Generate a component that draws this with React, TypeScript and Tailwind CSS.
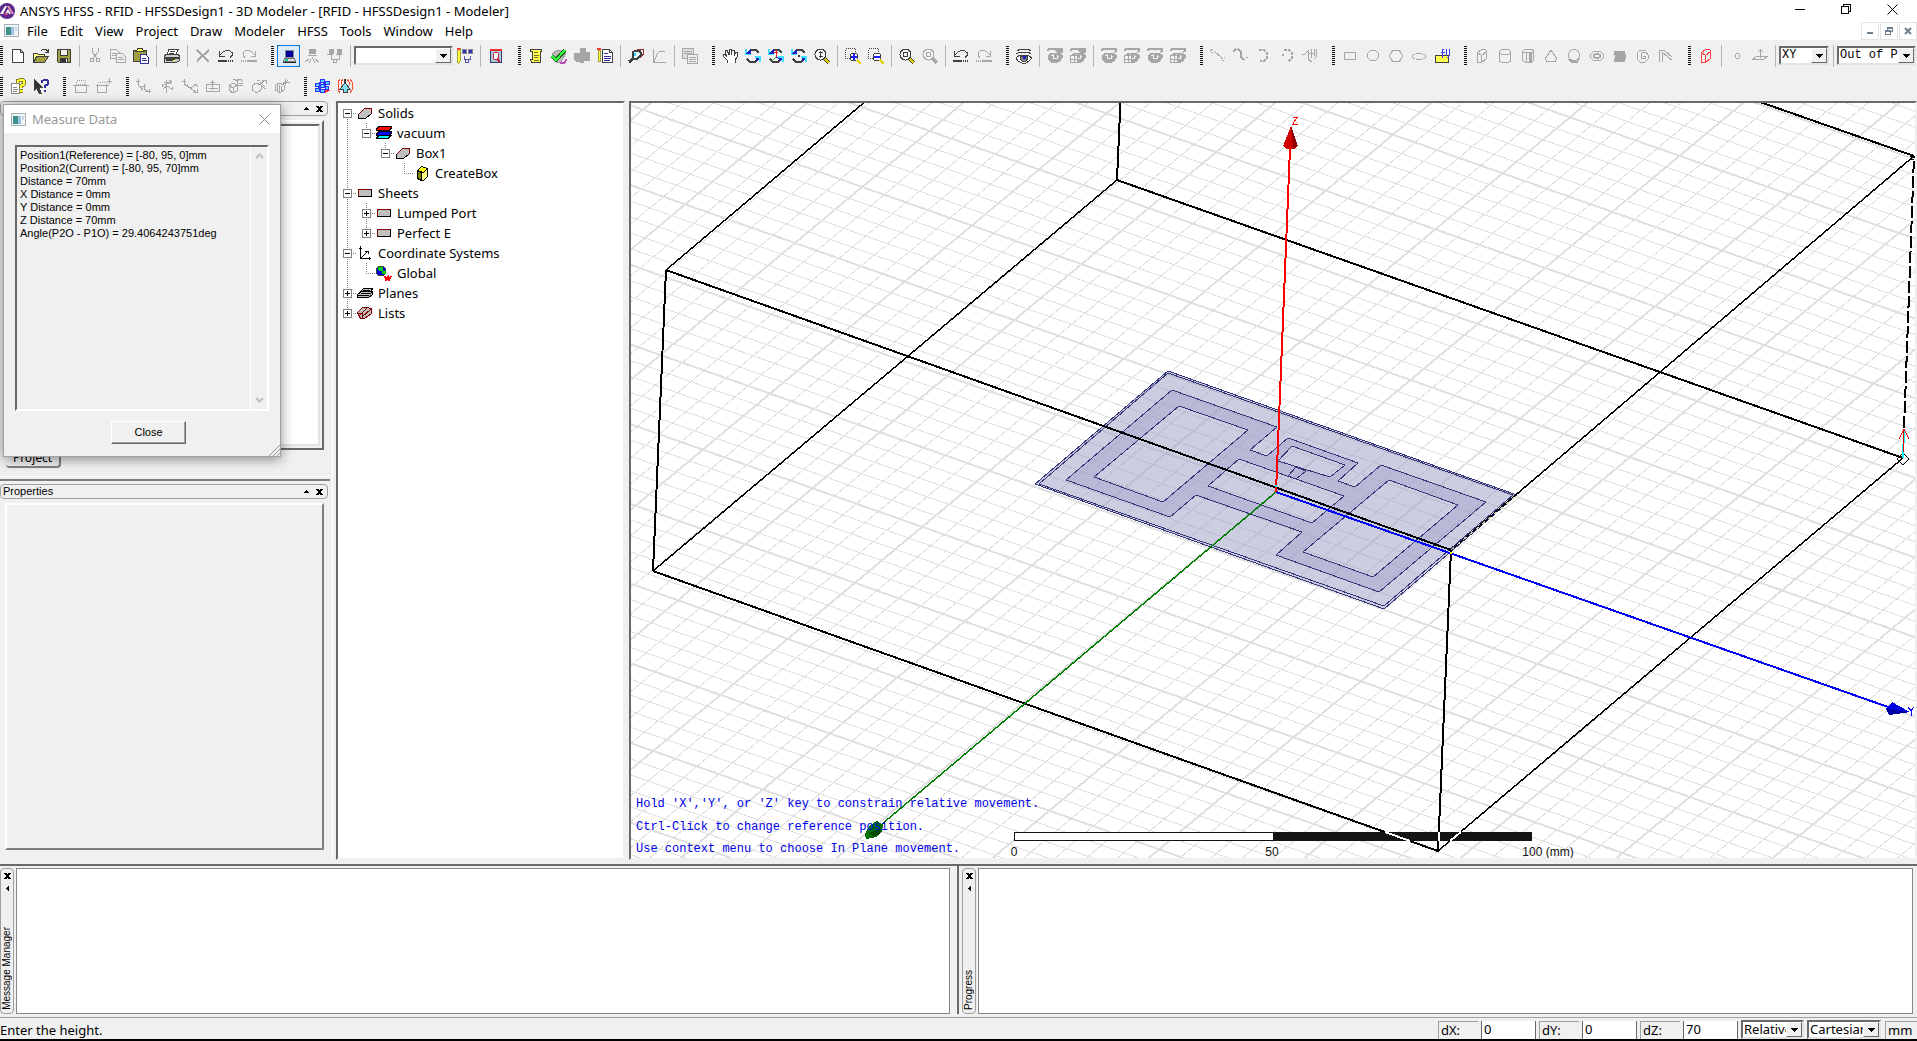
import { useState } from "react";
import type { ReactNode } from "react";

const UI = "font-['Noto_Sans','Noto_Sans_CJK_SC',sans-serif]";
const SMALL = "font-['Liberation_Sans',sans-serif]";

const GRAY = "#a6a6a6";
const DARK = "#404040";

/* ICONS */

function Icon({ children, color = DARK }: { children: ReactNode; color?: string }) {
  return (
    <svg
      width="16"
      height="16"
      viewBox="0 0 16 16"
      fill="none"
      stroke={color}
      shapeRendering="crispEdges"
      className="block shrink-0"
    >
      {children}
    </svg>
  );
}

const undoShape = (
  <>
    <path d="M1.500 3v5h5M2 7l3-3 3-1.500h3l3 2v3l-2 2" />
    <path d="M0 13h9" strokeWidth="2" />
    <path d="M10 13h6" strokeWidth="2" strokeDasharray="1 1" />
  </>
);
const redoShape = (
  <>
    <path d="M14.500 3v5h-5M14 7l-3-3-3-1.500h-3l-3 2v3l2 2" />
    <path d="M6 13h10" strokeWidth="2" />
    <path d="M0 13h6" strokeWidth="2" strokeDasharray="1 1" />
  </>
);
const rotateShape = (
  <>
    <path d="M4 4l2-2h5l3 3M12 12l-2 2H5l-3-3" strokeWidth="2" />
    <path d="M1 1v5h5" stroke="#40e0ff" strokeWidth="2" />
    <path d="M2 5l3-3v3z" fill="#2020c0" stroke="#2020c0" />
    <path d="M15 14V9h-5" stroke="#40e0ff" strokeWidth="2" />
    <path d="M14 11l-3 2v-3z" fill="#2020c0" stroke="#2020c0" />
  </>
);
const lensShape = (
  <>
    <circle cx="6.500" cy="6.500" r="5.500" fill="#f4f4f4" />
    <path d="M11 11l4 4" strokeWidth="3" />
  </>
);

function GrayEye({ cross = false, table = false }: { cross?: boolean; table?: boolean }) {
  return (
    <Icon color={GRAY}>
      <path d="M0 2l3-1h12v2l-2 1" strokeWidth="2" />
      <path d="M1 8l3-3h8l4 3-3 5-3 1.500H5L1 11z" fill={GRAY} />
      <path d="M4 8l2-1v3h4V7l2 2" stroke="#f1f1f1" />
      <path d="M0 4.500h10" stroke="#f1f1f1" />
      {cross && <path d="M7 0l4 4 4-4h1v4l-4 1" stroke={GRAY} strokeWidth="2" />}
      {table && <path d="M.5 7.500h7v7h-7zM.5 11h7M4 7.500v7" fill="#f1f1f1" />}
    </Icon>
  );
}

const icons: Record<string, ReactNode> = {
  New: (
    <Icon>
      <path d="M2.500 1.500h8l3 3v10h-11zM10.500 1.500v3h3" fill="#fff" />
    </Icon>
  ),
  Open: (
    <Icon>
      <path d="M.5 14.500v-9h4l1 1h6v2" fill="#ffff80" />
      <path d="M.5 14.500l3-6h12l-4 6z" fill="#a0a040" />
      <path d="M8 3l2-2h3l2 3M12 4h3V1" />
    </Icon>
  ),
  Save: (
    <Icon>
      <path d="M1.500 1.500h13v13h-12l-1-1z" fill="#a0a040" />
      <path d="M4.500 1.500h7v6h-7z" fill="#f1f1f1" />
      <path d="M4.500 10.500h7v4h-7z" fill="#333" />
      <path d="M10 11v3" stroke="#fff" />
    </Icon>
  ),
  Cut: (
    <Icon color={GRAY}>
      <path d="M5 0v4l5 6M11 0v4l-5 6" />
      <circle cx="5" cy="12" r="2" />
      <circle cx="11" cy="12" r="2" />
    </Icon>
  ),
  Copy: (
    <Icon color={GRAY}>
      <path d="M.5 1.500h6l3 3v6h-9zM2 5h5M2 7h5" />
      <path d="M6.500 5.500h6l3 3v6h-9zM8 9h5M8 11h6" fill="#f1f1f1" />
    </Icon>
  ),
  Paste: (
    <Icon>
      <path d="M.5 2.500h13v11h-13z" fill="#a0a040" />
      <path d="M3 3.500h8l-2-3H5z" fill="#ffff50" />
      <path d="M7.500 6.500h5l3 3v6h-8z" fill="#fff" stroke="#3030a0" />
      <path d="M9 10h4M9 12h5" stroke="#3030a0" />
    </Icon>
  ),
  Print: (
    <Icon>
      <path d="M5 1.500h9l-2 5H3z" fill="#fff" />
      <path d="M6 3h5M5 5h5" />
      <path d="M.5 7.500l2-1h11l2 1v5l-3 2h-12z" fill="#ccc" />
      <path d="M1 10h14M2 12h9" strokeWidth="2" />
      <path d="M9 12h2" stroke="#ff0" />
    </Icon>
  ),
  Delete: (
    <Icon color={GRAY}>
      <path d="M2 2l12 12M14 2L2 13" strokeWidth="2" />
    </Icon>
  ),
  Undo: <Icon>{undoShape}</Icon>,
  Redo: <Icon color={GRAY}>{redoShape}</Icon>,
  "Undo view": <Icon>{undoShape}</Icon>,
  "Redo view": <Icon color={GRAY}>{redoShape}</Icon>,
  "Local machine": (
    <Icon>
      <path d="M4.500 2.500h8v7h-8z" fill="#0000a0" stroke="#888" />
      <path d="M3.500 10.500h10l1 3h-12z" fill="#ddd" stroke="#777" />
      <path d="M4 12h3" stroke="#00d0a0" strokeWidth="2" />
      <path d="M2 14.500h13" stroke="#222" />
    </Icon>
  ),
  "Remote machine": (
    <Icon color={GRAY}>
      <path d="M5.500 1.500h6v4h-6zM4 7h9M8 9v2M5 11l-4 3M7 11l-2 4M9 11l2 4M11 11l4 3" fill={GRAY} />
    </Icon>
  ),
  Distributed: (
    <Icon color={GRAY}>
      <path d="M2 1h4v4H2zM10 1h4v4h-4z" fill={GRAY} />
      <path d="M0 6h6M9 6h6M4 7v4h8V7" />
      <circle cx="8" cy="13" r="2" fill="#f1f1f1" />
    </Icon>
  ),
  "Edit machines": (
    <Icon>
      <path d="M0 0h3v13l-1.500 3L0 13z" fill="#ff3" stroke="#a0a040" />
      <path d="M0 1h3" stroke="#f33" strokeWidth="2" />
      <path d="M5.500 1.500h4v4h-4zM11.500 1.500h4v4h-4z" fill="#3030c0" stroke="#888" />
      <path d="M7 8v3h6V8" stroke="#5050a0" />
      <circle cx="10" cy="13" r="2" stroke="#5050a0" />
    </Icon>
  ),
  Queue: (
    <Icon color="#3a3a70">
      <path d="M2.500 2.500h11v12h-11z" fill="#a9c8d8" />
      <path d="M2 2h12" stroke="#f03030" strokeWidth="2" />
      <ellipse cx="8" cy="8" rx="3" ry="4" fill="#fff" stroke="#d02040" />
      <path d="M9 11l3 3" stroke="#d02040" strokeWidth="2" />
    </Icon>
  ),
  Notes: (
    <Icon>
      <path d="M2.500 1.500h11v2h-1v11h-9l-1-3h2v-8h-2z" fill="#ffff50" />
      <path d="M6 4h4M6 7h5M6 9h4M6 12h5" stroke="#70702a" />
    </Icon>
  ),
  Validate: (
    <Icon>
      <path d="M1 6l5-4h8l1 3-5 9H5z" fill="#bbb" stroke="#999" />
      <path d="M9 15h4l3-4" stroke="#c050c0" strokeWidth="2" />
      <path d="M1 8l4 4L14 2" stroke="#206020" strokeWidth="4" />
      <path d="M1 8l4 4L14 2" stroke="#30ff40" strokeWidth="2" />
    </Icon>
  ),
  Analyze: (
    <Icon color={GRAY}>
      <path d="M6 .5h5l1 4h3l1 8H9v2l-6-1-3-3V6l6-1z" fill={GRAY} />
    </Icon>
  ),
  Results: (
    <Icon>
      <path d="M5.500 1.500h7l3 3v10h-10zM12.500 1.500v3h3" fill="#fff" />
      <path d="M7 5h4M7 8h7M7 10h7M7 12h6" stroke="#3030a0" />
      <path d="M1 2h2v11H1z" fill="#ff3" stroke="#a0a040" />
      <path d="M0 1h4" stroke="#f33" strokeWidth="2" />
    </Icon>
  ),
  Probe: (
    <Icon>
      <path d="M9 1.500h6v5l-3 3" stroke="#a03030" />
      <path d="M4.500 4.500l3-2h4l1 2v3l-3 3h-4l-1-2z" fill="#e8ffff" strokeWidth="2" />
      <path d="M7 5v3" stroke="#30d0ff" strokeWidth="2" />
      <path d="M5 11l-4 3" strokeWidth="3" />
    </Icon>
  ),
  Plot: (
    <Icon color={GRAY}>
      <path d="M2.500 1v13.500H15M3 14l3-8 3-3h5" />
    </Icon>
  ),
  "Copy image": (
    <Icon color={GRAY}>
      <path d="M.5 .5h11v10H.5zM2 3h8M2 5h8" fill="#ddd" />
      <path d="M5.500 6.500h10v9h-10zM7 9h7M7 11h7M7 13h7" fill="#f1f1f1" />
    </Icon>
  ),
  Pan: (
    <Icon>
      <path
        d="M5 15v-3L1 8V6h2l2 3-2-6 1-1h1l2 5V1h2v6l1-5h2v6l2-4h2l-1 5-2 3v3"
        fill="#fff"
      />
    </Icon>
  ),
  Rotate: <Icon>{rotateShape}</Icon>,
  "Rotate around axis": (
    <Icon>
      {rotateShape}
      <path d="M8 9V2M6 4h4" stroke="#e02020" />
      <path d="M8 9l-4 4" stroke="#20a020" />
      <path d="M8 9l5 3" stroke="#2020e0" />
    </Icon>
  ),
  "Rotate center": (
    <Icon>
      {rotateShape}
      <path d="M7 8h2" strokeWidth="2" />
    </Icon>
  ),
  "Zoom dynamic": (
    <Icon>
      {lensShape}
      <path d="M11 11l4 4" stroke="#e0d000" strokeWidth="2" />
      <path d="M6.500 3v7M4.500 4.500h4M4.500 8.500h4" strokeWidth="1" />
    </Icon>
  ),
  "Zoom in": (
    <Icon>
      <path d="M.5 .5h10v10H.5z" strokeDasharray="1 1" />
      <circle cx="9" cy="9" r="4" fill="#fff" />
      <path d="M6 9h6M9 6v6" stroke="#2020ff" strokeWidth="2" />
      <path d="M12 12l4 4" stroke="#e0d000" strokeWidth="2" />
    </Icon>
  ),
  "Zoom out": (
    <Icon>
      <path d="M.5 .5h10v10H.5z" strokeDasharray="1 1" />
      <circle cx="9" cy="9" r="4" fill="#fff" />
      <path d="M6 9h6" stroke="#2020ff" strokeWidth="2" />
      <path d="M12 12l4 4" stroke="#e0d000" strokeWidth="2" />
    </Icon>
  ),
  "Fit all": (
    <Icon>
      {lensShape}
      <path d="M11 11l4 4" stroke="#e0d000" strokeWidth="2" />
      <path d="M4.500 4.500h4v4h-4z" />
    </Icon>
  ),
  "Fit selection": (
    <Icon color={GRAY}>
      {lensShape}
      <path d="M4.500 4.500h4v4h-4z" />
    </Icon>
  ),
  Visibility: (
    <Icon>
      <path d="M1 3l3-2h8l3 2" />
      <path d="M0 6l4-2h8l3 2" />
      <path d="M0 10l4-3h8l4 3-3 3-3 2H6l-4-2z" fill="#fff" />
      <path d="M5 8h6l1 2-2 3H6l-2-2z" fill="#888" />
      <path d="M7 9.500h3" stroke="#2020c0" strokeWidth="3" />
    </Icon>
  ),
  "Hide selection": <GrayEye cross />,
  "Hide selection all views": <GrayEye cross table />,
  "Show selection": <GrayEye />,
  "Show selection all views": <GrayEye table />,
  "Show all": <GrayEye />,
  "Show all views": <GrayEye table />,
  Line: (
    <Icon color={GRAY}>
      <path d="M0 3l3-2M4 3l8 7" strokeWidth="1" />
      <path d="M11 11l4-2M1 4h2M12 12h3" strokeDasharray="2 1" />
    </Icon>
  ),
  Spline: (
    <Icon color={GRAY}>
      <path d="M0 4l3-3M5 1l3 3v5l3 3" strokeWidth="2" />
      <path d="M11 12l4-3" strokeDasharray="2 1" />
    </Icon>
  ),
  "Arc 3 point": (
    <Icon color={GRAY}>
      <path d="M3 2h5l3 3v5l-3 3H4" strokeWidth="2" strokeDasharray="3 1" />
    </Icon>
  ),
  "Arc center": (
    <Icon color={GRAY}>
      <path d="M5 2h5l3 3v5l-4 4" strokeWidth="2" strokeDasharray="3 1" />
      <path d="M3 7h2" strokeWidth="2" />
    </Icon>
  ),
  "Equation curve": (
    <Icon color={GRAY}>
      <path d="M0 6h3l3-3M6 2v9l4 3M9 1v9M7 5h5M12 1v7M14 1v8l-2 2" />
    </Icon>
  ),
  Rectangle: (
    <Icon color={GRAY}>
      <path d="M2.500 4.500h11v7h-11z" />
    </Icon>
  ),
  Circle: (
    <Icon color={GRAY}>
      <circle cx="8" cy="7.500" r="5.500" />
    </Icon>
  ),
  Polygon: (
    <Icon color={GRAY}>
      <path d="M4.500 2.500h7l3 5.500-3 5.500h-7L1.500 8z" />
    </Icon>
  ),
  Ellipse: (
    <Icon color={GRAY}>
      <ellipse cx="8" cy="8.500" rx="6.500" ry="3" />
    </Icon>
  ),
  "Equation surface": (
    <Icon>
      <path d="M1.500 7.500h13v7h-13z" fill="#ffff50" />
      <path d="M8 10V2l2-1M7 4h4M12 1v6M15 1v7l-2 2" stroke="#4040ff" />
    </Icon>
  ),
  Box: (
    <Icon color={GRAY}>
      <path d="M3.500 4.500l4-3h4l1 1v8l-5 4h-4zM3.500 4.500l4 3 5-4M7.500 7.500v7" />
    </Icon>
  ),
  Cylinder: (
    <Icon color={GRAY}>
      <ellipse cx="8" cy="4" rx="5.500" ry="2.500" />
      <path d="M2.500 4v9l2 1.500h7l2-1.500V4" />
    </Icon>
  ),
  "Regular polyhedron": (
    <Icon color={GRAY}>
      <path d="M2.500 3.500l2-2h8l1 2v9l-2 2h-6l-3-2zM2.500 4.500h11M6.500 5v9" />
      <path d="M10.500 5v9" strokeWidth="3" />
    </Icon>
  ),
  Cone: (
    <Icon color={GRAY}>
      <path d="M8 2l6 9-2 2.500H4L2 11z" />
    </Icon>
  ),
  Sphere: (
    <Icon color={GRAY}>
      <circle cx="8" cy="7" r="5.500" />
      <path d="M3 11l3 3h5l2-4" strokeWidth="2" />
    </Icon>
  ),
  Torus: (
    <Icon color={GRAY}>
      <ellipse cx="8" cy="8" rx="6.500" ry="5" />
      <ellipse cx="8" cy="8" rx="3" ry="2" strokeWidth="2" />
    </Icon>
  ),
  Helix: (
    <Icon color={GRAY}>
      <path d="M2 4h11M3 8h11M2 12h11" strokeWidth="3" />
      <path d="M1 6h13M2 10h12" />
    </Icon>
  ),
  Spiral: (
    <Icon color={GRAY}>
      <path d="M8 8h2v2H6V6l2-2h3l2 3v4l-3 3H5l-3-3V5l3-3h6" />
    </Icon>
  ),
  "Bond wire": (
    <Icon color={GRAY}>
      <path d="M1.500 14V2.500h5l8 7M4.500 14V5l2 1 7 6" strokeWidth="1" />
    </Icon>
  ),
  Region: (
    <Icon color="#ff4040">
      <path d="M3.500 4.500l4-3h4l1 1v8l-5 4h-4zM3.500 4.500l4 3 5-4M7.500 7.500v7" />
    </Icon>
  ),
  Point: (
    <Icon color={GRAY}>
      <path d="M6.500 7l1-1.500h2l1 1.500v2l-1 1.500h-2l-1-1.500z" />
    </Icon>
  ),
  Plane: (
    <Icon color={GRAY}>
      <path d="M.5 11.500l4-3h11l-4 3zM8.500 10V2M6 4l2.500-2L11 4" />
    </Icon>
  ),
  "Help topics": (
    <Icon>
      <path d="M1.500 5.500h8v10h-8zM3 9h4M3 11h5M3 13h4" fill="#fff" stroke="#888" />
      <path d="M8 5V3l2-1h3l1 1v3l-3 2v2M10 13h3" stroke="#80802a" strokeWidth="4" />
      <path d="M8 5V3l2-1h3l1 1v3l-3 2v2M10 13h3" stroke="#ffff30" strokeWidth="2" />
    </Icon>
  ),
  "Context help": (
    <Icon>
      <path d="M1 1v12l3-3 2 5h2L6 9h3z" fill="#333" />
      <path d="M9 5V3l2-1h3l1 1v3l-3 2v2M11 13h2" stroke="#3030a0" strokeWidth="2" />
    </Icon>
  ),
  "Section A": (
    <Icon color={GRAY}>
      <path d="M3.500 2.500h9v4h-9z" strokeDasharray="1 1" />
      <path d="M0 7.500h16M2.500 8v6.500h11V8" />
    </Icon>
  ),
  "Section B": (
    <Icon color={GRAY}>
      <path d="M1.500 4.500h9v3h-9z" strokeDasharray="1 1" />
      <path d="M0 7.500h13M1.500 8v6.500h9V8M13.500 0v6M11 3h5" />
    </Icon>
  ),
  "Relative CS offset": (
    <Icon color={GRAY}>
      <path d="M2 1v6l5 4M0 3h4M8 6v5l6 3M4 9l3 2-2 2M9 13h6M6 8h4M13 11v4" />
    </Icon>
  ),
  "Relative CS rotate": (
    <Icon color={GRAY}>
      <path d="M7.500 15V2M5 4h6M3 8l9-4M4 11l4-3 5 3M10 2l3 2-2 2M3 6v3M13 9v3" />
    </Icon>
  ),
  "Relative CS both": (
    <Icon color={GRAY}>
      <path d="M2 1v5l6 4M0 3h4M8 10l6-3M8 10l6 4M12 6l3 1v2M11 14h4v-3M5 6v3" />
    </Icon>
  ),
  "Face CS": (
    <Icon color={GRAY}>
      <path d="M1.500 6.500h13v7h-13zM7.500 12V2M5 4h5M4 10h9" />
    </Icon>
  ),
  "Object CS offset": (
    <Icon color={GRAY}>
      <path d="M1 7l4-2 4 2v6l-4 2-4-3zM1 7l4 3 4-3M5 10v5M9 1v6h6M12 1l3 3M5 1h3M7 3l7-2M11 5h4" />
    </Icon>
  ),
  "Object CS rotate": (
    <Icon color={GRAY}>
      <path d="M1 8l4-3 5 2v5l-4 3-5-3zM8 7l6-5M11 2h4v4M10 8l5 3M6 2h3M9 4l5 5" />
    </Icon>
  ),
  "Object CS both": (
    <Icon color={GRAY}>
      <path d="M1 8l4-3 5 2v5l-4 3-5-3zM3 7v6M5 7v7M7 8v6M8 7l6-5M9 4h7M11 1v6" />
    </Icon>
  ),
  Assign: (
    <Icon color="#3030ff">
      <path d="M9 14l6-3" stroke="#f03030" strokeWidth="4" />
      <path d="M6.500 1.500h4v3h-4zM11.500 3.500h4v3h-4zM1.500 5.500h4v3h-4zM6.500 6.500h4v3h-4zM11.500 8.500h3v3h-3zM1.500 10.500h4v3h-4zM6.500 11.500h4v3h-4z" fill="#50d8ff" />
      <path d="M5 5l2 2M10 5l2 4M5 9l2 2" strokeWidth="2" />
    </Icon>
  ),
  Radiation: (
    <Icon>
      <path d="M3 1L1 4v8l2 3M13 1l2 3v8l-2 3M6 1L4 4v3M10 1l2 3v3" stroke="#ff5030" />
      <path d="M8 1l1 5 4 5h-3v3H6v-3H3l4-5z" fill="#80e0f0" />
    </Icon>
  ),
};

const blankIcon = <Icon>{null}</Icon>;

/* "|" is a separator between buttons of one toolbar */
const mainBar = ["New", "Open", "Save", "|", "Cut", "Copy", "Paste", "|", "Print", "|", "Delete", "Undo", "Redo"];
const machineBar = ["Local machine", "Remote machine", "Distributed"];
const analysisBar = ["Notes", "Validate", "Analyze", "Results", "|", "Probe", "Plot", "|", "Copy image"];
const viewBar = [
  "Pan", "Rotate", "Rotate around axis", "Rotate center", "Zoom dynamic", "|",
  "Zoom in", "Zoom out", "|", "Fit all", "Fit selection", "|", "Undo view", "Redo view",
];
const visibilityBar = [
  "Visibility", "|", "Hide selection", "Hide selection all views", "|",
  "Show selection", "Show selection all views", "Show all", "Show all views",
];
const curveBar = ["Line", "Spline", "Arc 3 point", "Arc center", "Equation curve"];
const sheetBar = ["Rectangle", "Circle", "Polygon", "Ellipse", "Equation surface"];
const solidBar = ["Box", "Cylinder", "Regular polyhedron", "Cone", "Sphere", "Torus", "Helix", "Spiral", "Bond wire"];
const csBar = [
  "Relative CS offset", "Relative CS rotate", "Relative CS both", "Face CS",
  "Object CS offset", "Object CS rotate", "Object CS both",
];

function Separator() {
  return (
    <span className="flex w-2 shrink-0 justify-center">
      <span className="h-[22px] w-px bg-[#b4b4b4]" />
    </span>
  );
}

function Buttons({ names, active }: { names: string[]; active?: string }) {
  return (
    <>
      {names.map((name, i) =>
        name === "|" ? (
          <Separator key={i} />
        ) : (
          <button
            key={name}
            title={name}
            aria-label={name}
            className={
              name === active
                ? "flex h-[22px] w-[23px] shrink-0 items-center justify-center border border-[#0078d7] bg-[#d9ebf9]"
                : "flex h-[22px] w-[23px] shrink-0 items-center justify-center"
            }
          >
            {icons[name] ?? blankIcon}
          </button>
        )
      )}
    </>
  );
}

function Toolbar({ children }: { children: ReactNode }) {
  return (
    <div className="flex shrink-0 items-center">
      <span className="mr-[3px] h-[19px] w-[3px] bg-[repeating-linear-gradient(#111_0_1px,transparent_1px_2px)]" />
      {children}
    </div>
  );
}

function DropDown({
  label,
  options,
  className,
}: {
  label: string;
  options: string[];
  className: string;
}) {
  return (
    <div className={`relative h-[19px] shrink-0 border-2 border-t-[#696969] border-l-[#696969] border-r-[#e3e3e3] border-b-[#e3e3e3] bg-white ${className}`}>
      <select
        aria-label={label}
        className="block h-full w-full appearance-none overflow-hidden pl-px leading-[15px] outline-none"
      >
        {options.map((o) => (
          <option key={o}>{o}</option>
        ))}
      </select>
      <span className="pointer-events-none absolute top-0 right-0 flex h-full w-4 items-center justify-center border border-t-white border-l-white border-r-[#696969] border-b-[#696969] bg-[#f0f0f0]">
        <svg width="7" height="4" viewBox="0 0 7 4" shapeRendering="crispEdges">
          <path d="M0 0h7L3.500 4z" />
        </svg>
      </span>
    </div>
  );
}

function AppIcon() {
  return (
    <svg width="15" height="16" viewBox="0 0 15 16">
      <circle cx="7" cy="8" r="8" fill="#5b2a8c" />
      <path d="M0 11l5-8h2l-4 8zM5 11l3-5 3 5H9L8 9l-1 2z" fill="#fff" />
      <path d="M7 3h2l5 8h-2z" fill="#f0a0b0" />
      <path d="M4 12l2-3 2 3z" fill="#e05070" />
    </svg>
  );
}

function WindowIcon() {
  return (
    <svg width="15" height="13" viewBox="0 0 15 13" shapeRendering="crispEdges">
      <path d="M.5 .5h14v12H.5z" fill="#eef3f6" stroke="#a8b0b8" />
      <path d="M2 3h5v8H2z" fill="#3f8f8a" />
      <path d="M7 3h3v8H7z" fill="#9cc3dd" />
      <path d="M11 3h2v4h-2z" fill="#c8d8e4" />
    </svg>
  );
}

/* MODEL TREE */

const treeIcons: Record<string, ReactNode> = {
  solid: (
    <Icon color="#000">
      <path d="M1.500 13.500v-4l6-6h7v5l-6 5z" fill="#c0c0c0" />
      <path d="M1.500 9.500l6-6h7v5" stroke="#800000" />
    </Icon>
  ),
  material: (
    <Icon color="#000">
      <path d="M0 13.500l3-3h12l-3 3z" fill="#0ff" />
      <path d="M0 9.500l3-3h13v1l-3 3H0z" fill="#00f" />
      <path d="M0 4.500l3-3h13v1l-3 3H0z" fill="#f00" />
    </Icon>
  ),
  box: (
    <Icon color="#000">
      <path d="M3.500 5.500l4-4 6 2v8l-4 4-6-2z" fill="#ffff80" />
      <path d="M3.500 5.500l4 2v8l-4-2z" fill="#808000" />
      <path d="M3.500 5.500l4-4 6 2-4 4z" fill="#ff0" />
    </Icon>
  ),
  sheet: (
    <Icon color="#000">
      <path d="M1.500 4.500h13v7h-13z" fill="#c0c0c0" />
      <path d="M1.500 11V4.500H14" stroke="#800000" />
    </Icon>
  ),
  cs: (
    <Icon color="#000">
      <path d="M3.500 1v12.500H14M2 3h3M12 12v3M4 13l7-7M8 6h3v3" />
    </Icon>
  ),
  global: (
    <Icon color="#000">
      <circle cx="5" cy="6" r="5" fill="#0000e0" stroke="#404040" />
      <path d="M2 2h4v3H3zM6 6h3v2H6z" fill="#00d000" stroke="#00d000" />
      <path d="M9 11l1 4 2-3 1 3 2-4" stroke="#f00" strokeWidth="2" />
    </Icon>
  ),
  planes: (
    <Icon color="#000">
      <path d="M3.500 6.500l3-3h9l-2 4z" fill="#c0c0c0" />
      <path d="M.5 12.500v-3l4-3h11v3l-4 3z" fill="#c0c0c0" />
      <path d="M1 10.500h11M4 8.500h9l3-2M6 5.500h7" />
    </Icon>
  ),
  lists: (
    <Icon color="#800000">
      <path d="M.5 7.500l5-5h4l5 1v5l-7 5h-4z" fill="#c0c0c0" />
      <path d="M3 10l8-8M5 12l9-8M1 8h4v5" />
    </Icon>
  ),
};

// guides: what each column left of the icon holds, "I" line, "+" or "-" box, "L" corner, " " nothing
const tree = [
  { guides: "-", icon: "solid", label: "Solids", first: true },
  { guides: "I-", icon: "material", label: "vacuum", last: true },
  { guides: "I -", icon: "solid", label: "Box1", last: true },
  { guides: "I  L", icon: "box", label: "CreateBox", last: true },
  { guides: "-", icon: "sheet", label: "Sheets" },
  { guides: "I+", icon: "sheet", label: "Lumped Port" },
  { guides: "I+", icon: "sheet", label: "Perfect E", last: true },
  { guides: "-", icon: "cs", label: "Coordinate Systems" },
  { guides: "IL", icon: "global", label: "Global", last: true },
  { guides: "+", icon: "planes", label: "Planes" },
  { guides: "+", icon: "lists", label: "Lists", last: true },
];

function Guide({ kind, first, last }: { kind: string; first?: boolean; last?: boolean }) {
  const node = kind !== "I";
  return (
    <svg width="19" height="20" viewBox="0 0 19 20" shapeRendering="crispEdges" className="block shrink-0">
      {kind !== " " && (
        <path
          d={`M9.500 ${node && first ? 10 : 0}V${node && last ? 10 : 20}${node ? "M9 10.500h10" : ""}`}
          stroke="#808080"
          strokeDasharray="1 1"
        />
      )}
      {(kind === "-" || kind === "+") && (
        <>
          <path d="M5.500 6.500h8v8h-8z" fill="#fff" stroke="#808080" />
          <path d={kind === "+" ? "M7 10.500h5M9.500 8v5" : "M7 10.500h5"} stroke="#000" />
        </>
      )}
    </svg>
  );
}

function ModelTree() {
  return (
    <div className="w-[289px] shrink-0 border-2 border-t-[#696969] border-l-[#696969] border-r-[#f0f0f0] border-b-[#f0f0f0] bg-white">
      <ul className="text-[13px] leading-5 text-black">
        {tree.map((row) => (
          <li key={row.label} className="flex h-5 items-center">
            {row.guides.split("").map((g, i) => (
              <Guide
                key={i}
                kind={g}
                first={row.first}
                last={row.last && i === row.guides.length - 1}
              />
            ))}
            {treeIcons[row.icon]}
            <span className="ml-[5px] whitespace-nowrap">{row.label}</span>
          </li>
        ))}
      </ul>
    </div>
  );
}

/* 3D VIEW */

const ORIGIN = { x: 1276, y: 492 };
const SLOPE_Y = 0.352;
const SLOPE_X = -0.833;
const STEP_Y = 15.94;
const STEP_X = 31.2;

function Grid() {
  const minor: string[] = [];
  const major: string[] = [];
  const left = 620;
  const right = 1930;
  for (let i = -55; i <= 55; i++) {
    const y = ORIGIN.y + i * STEP_Y;
    const d = `M${left} ${y + (left - ORIGIN.x) * SLOPE_Y}L${right} ${y + (right - ORIGIN.x) * SLOPE_Y}`;
    (i % 5 === 0 ? major : minor).push(d);
  }
  for (let i = -40; i <= 40; i++) {
    const x = ORIGIN.x + i * STEP_X;
    const d = `M${left} ${ORIGIN.y + (left - x) * SLOPE_X}L${right} ${ORIGIN.y + (right - x) * SLOPE_X}`;
    (i % 5 === 0 ? major : minor).push(d);
  }
  return (
    <g stroke="#e0e0e0" fill="none">
      <path d={minor.join("")} />
      <path d={major.join("")} strokeWidth="2" />
    </g>
  );
}

function Antenna() {
  return (
    <g stroke="#35357a" fill="none">
      <path d="M1168 371L1517 495L1384 609L1035 484Z" fill="#9c9cc4" fillOpacity="0.5" />
      <path d="M1168 373L1513 495L1384 606L1039 484Z" />
      <path
        fillRule="evenodd"
        fill="#9c9cc8"
        fillOpacity="0.4"
        d="M1172 390L1277 427L1250 450L1267 456L1288 438L1358 463L1338 481L1355 487L1381 465L1486 502L1379 592L1276 555L1302 532L1196 495L1170 517L1066 480Z
           M1179 406L1248 430L1163 502L1094 477Z
           M1239 459L1344 496L1312 523L1208 486Z
           M1389 480L1458 505L1373 577L1303 552Z
           M1292 446L1345 465L1330 477L1278 461Z"
      />
      <path d="M1296 467L1306 471L1296 479L1288 476Z" />
    </g>
  );
}

function ModelView() {
  return (
    <div className="min-w-0 flex-1 border-2 border-t-[#696969] border-l-[#696969] border-r-[#f0f0f0] border-b-[#f0f0f0] bg-white">
      <svg
        viewBox="631 103 1284 756"
        preserveAspectRatio="xMinYMin slice"
        shapeRendering="crispEdges"
        className="block h-full w-full font-['Liberation_Sans',sans-serif]"
      >
        <Grid />
        <Antenna />

        {/* scale */}
        <path d="M1014.500 832.500H1273.500V840.500H1014.500Z" fill="#fff" stroke="#111" />
        <path d="M1273 832H1532V841H1273Z" fill="#141414" />
        <g fontSize="12" fill="#111" textAnchor="middle">
          <text x="1014" y="856">0</text>
          <text x="1272" y="856">50</text>
          <text x="1548" y="856">100 (mm)</text>
        </g>

        {/* region box */}
        <g stroke="#000" strokeWidth="2" fill="none">
          <path d="M653 571L1438 851M1903 458L1117 180" />
          <path d="M653 571L666 270M1438 851L1451 550M1117 180L1121 90" />
          <path d="M666 270L1451 550M1740 95L1914 156" />
          <path
            d="M653 571L1117 180M1438 851L1903 458M666 270L880 89M1451 550L1914 156"
            strokeWidth="1.5"
          />
          <path d="M1903 458L1914 156" strokeDasharray="12 3" />
        </g>
        <path d="M1385 832L1410 841M1439 832V841M1461 832L1450 841" stroke="#fff" strokeWidth="2" />
        <path d="M1451 550L1516 496" stroke="#d0d0a0" strokeDasharray="4 4" />

        {/* axes */}
        <path d="M1276 492L1891 708" stroke="#00f" strokeWidth="2" />
        <path d="M1276 492L882 824" stroke="#008000" strokeWidth="1.5" />
        <path d="M1276 492L1290 148" stroke="#f00" strokeWidth="2" />
        <path d="M1291 126L1283 146L1287 149H1294L1298 146Z" fill="#d00000" />
        <path d="M1291 126L1293 149L1298 146Z" fill="#900000" />
        <path d="M1910 712L1892 702L1886 708L1889 715Z" fill="#0000e0" />
        <path d="M1910 712L1886 709L1889 715Z" fill="#0000a0" />
        <path d="M866 839L865 834L870 825L877 821L883 825L882 832L876 837Z" fill="#007000" />
        <path d="M869 833L882 828L880 834L873 837Z" fill="#004800" />
        <path d="M1292.500 117.500H1297L1292.500 124.500H1298" stroke="#f00" fill="none" />
        <path d="M1908 707L1911 711L1914 707M1911 711V716" stroke="#00f" fill="none" />
        <path d="M1275 486h2" stroke="#0ff" strokeWidth="2" />
        <path d="M1450 553h2" stroke="#ff0" strokeWidth="2" />

        {/* measured corner */}
        <path d="M1903 453L1909 459L1903 465L1897 459Z" fill="none" stroke="#000" />
        <path d="M1903 458L1904 430" stroke="#0ff" strokeWidth="2" />
        <path d="M1903 452V430M1899 439L1904 429L1909 439" stroke="#e00000" fill="none" />
        <path d="M1910 156h4M1911 159h3" stroke="#000" />

        <g fontSize="12" fill="#0000e8" className="font-['Liberation_Mono',monospace]">
          <text x="636" y="807">Hold 'X','Y', or 'Z' key to constrain relative movement.</text>
          <text x="636" y="830">Ctrl-Click to change reference position.</text>
          <text x="636" y="852">Use context menu to choose In Plane movement.</text>
        </g>
      </svg>
    </div>
  );
}

/* DOCKED PANELS */

function PinIcon({ side = false }: { side?: boolean }) {
  return (
    <svg width="5" height="5" viewBox="0 0 5 5" shapeRendering="crispEdges">
      <path d={side ? "M4 0v5L1 2.500z" : "M0 4h5L2.500 1z"} />
    </svg>
  );
}

function CrossIcon() {
  return (
    <svg width="7" height="6" viewBox="0 0 7 6" shapeRendering="crispEdges">
      <path d="M1 0l5 6M6 0L1 6" stroke="#000" strokeWidth="2" />
    </svg>
  );
}

function DockHeader({ name, title }: { name: string; title?: string }) {
  return (
    <div className="mr-[2px] flex h-[15px] shrink-0 items-center rounded-sm border border-[#a0a0a0] pr-1 pl-[2px]">
      <div className={`flex-1 text-[11px] leading-[13px] ${SMALL}`}>{title && <h2>{title}</h2>}</div>
      <button aria-label={`Pin ${name}`} className="mr-[7px]">
        <PinIcon />
      </button>
      <button aria-label={`Hide ${name}`}>
        <CrossIcon />
      </button>
    </div>
  );
}

function BottomPanel({ title, className }: { title: string; className: string }) {
  return (
    <section className={`flex min-w-0 gap-[2px] pt-[2px] ${className}`}>
      <div className="flex w-[14px] shrink-0 flex-col items-center rounded-sm border border-[#a0a0a0] pt-1 pb-[3px]">
        <button aria-label={`Hide ${title}`}>
          <CrossIcon />
        </button>
        <button aria-label={`Pin ${title}`} className="mt-[7px]">
          <PinIcon side />
        </button>
        <h2
          className={`mt-auto rotate-180 text-[10px] leading-[12px] whitespace-nowrap [writing-mode:vertical-rl] ${SMALL}`}
        >
          {title}
        </h2>
      </div>
      <div className="min-w-0 flex-1 border border-[#828790] bg-white" />
    </section>
  );
}

function MeasureDialog({ onClose }: { onClose: () => void }) {
  const lines = [
    "Position1(Reference) = [-80, 95, 0]mm",
    "Position2(Current) = [-80, 95, 70]mm",
    "Distance = 70mm",
    "X Distance = 0mm",
    "Y Distance = 0mm",
    "Z Distance = 70mm",
    "Angle(P2O - P1O) = 29.4064243751deg",
  ];

  return (
    <div
      role="dialog"
      aria-label="Measure Data"
      className="absolute top-[3px] left-[3px] z-10 flex h-[353px] w-[278px] flex-col border border-[#a0a0a0] bg-[#f0f0f0] shadow-[0_2px_12px_rgba(0,0,0,0.45)]"
    >
      <div className="flex h-[28px] shrink-0 items-center bg-white pr-[10px] pl-[7px]">
        <WindowIcon />
        <h2 className="ml-[6px] flex-1 text-[13px] leading-5 text-[#999]">Measure Data</h2>
        <button aria-label="Close dialog">
          <svg width="11" height="11" viewBox="0 0 11 11" stroke="#8a8a8a">
            <path d="M.5 .5l10 10M10.500 .5l-10 10" />
          </svg>
        </button>
      </div>

      <div className="mx-[11px] mt-[12px] flex h-[266px] border-2 border-t-[#696969] border-l-[#696969] border-r-white border-b-white">
        <textarea
          readOnly
          aria-label="Measurements"
          value={lines.join("\n")}
          className={`flex-1 resize-none overflow-hidden bg-transparent pt-[2px] pl-[3px] text-[11px] leading-[13px] whitespace-pre text-black outline-none ${SMALL}`}
        />
        <div className="flex w-[17px] flex-col items-center justify-between border-l border-white py-[6px]">
          <svg width="9" height="6" viewBox="0 0 9 6" fill="none" stroke="#bfbfbf" strokeWidth="2">
            <path d="M1 5l3.500-3.500L8 5" />
          </svg>
          <svg width="9" height="6" viewBox="0 0 9 6" fill="none" stroke="#bfbfbf" strokeWidth="2">
            <path d="M1 1l3.500 3.500L8 1" />
          </svg>
        </div>
      </div>

      <div className="flex flex-1 items-start pt-[10px] pl-[107px]">
        <button
          onClick={onClose}
          className={`h-[23px] w-[75px] border border-t-white border-l-white border-r-[#696969] border-b-[#696969] text-[11px] shadow-[inset_-1px_-1px_0_#a0a0a0] ${SMALL}`}
        >
          Close
        </button>
        <svg width="12" height="12" viewBox="0 0 12 12" stroke="#909090" className="ml-auto self-end">
          <path d="M1 12L12 1M5 12l7-7M9 12l3-3" />
        </svg>
      </div>
    </div>
  );
}

function LeftDock() {
  return (
    <aside className="flex w-[330px] shrink-0 flex-col">
      <section className="flex h-[374px] shrink-0 flex-col">
        <DockHeader name="Project Manager" />
        <div className="mt-1 mr-[6px] ml-[5px] h-[330px] border-2 border-t-white border-l-white border-r-[#696969] border-b-[#696969] p-[2px]">
          <div className="h-full border-2 border-t-[#696969] border-l-[#696969] border-r-[#e3e3e3] border-b-[#e3e3e3] bg-white" />
        </div>
        <button
          className={`ml-[6px] h-[18px] w-[55px] rounded-b-sm border-r-2 border-b-2 border-[#808080] text-[12px] leading-[16px]`}
        >
          Project
        </button>
      </section>

      <div className="mt-px h-[5px] shrink-0 border-t border-b-2 border-t-white border-b-[#808080]" />

      <section className="flex min-h-0 flex-1 flex-col pt-[3px]">
        <DockHeader name="Properties" title="Properties" />
        <div className="mt-1 mr-[6px] mb-[10px] ml-[5px] flex-1 border-2 border-t-white border-l-white border-r-[#808080] border-b-[#808080]" />
      </section>
    </aside>
  );
}

function StatusField({ id, label, value }: { id: string; label: string; value: string }) {
  const [text, setText] = useState(value);
  return (
    <>
      <label
        htmlFor={id}
        className="h-[18px] w-10 border-t border-l border-[#a0a0a0] pl-[2px] leading-[17px]"
      >
        {label}
      </label>
      <input
        id={id}
        value={text}
        onChange={(e) => setText(e.target.value)}
        className="h-[18px] w-[55px] border-x border-[#696969] bg-white pl-[2px] outline-none"
      />
    </>
  );
}

const menus = ["File", "Edit", "View", "Project", "Draw", "Modeler", "HFSS", "Tools", "Window", "Help"];

export default function App() {
  const [measuring, setMeasuring] = useState(true);

  return (
    <div
      className={`flex h-screen flex-col overflow-hidden border-b-2 border-black bg-[#f0f0f0] text-black ${UI}`}
    >
      {/* TITLE */}
      <header className="shrink-0 bg-white">
        <div className="flex h-[21px] items-center">
          <AppIcon />
          <h1 className="ml-[5px] flex-1 text-[13px] leading-5">
            ANSYS HFSS - RFID - HFSSDesign1 - 3D Modeler - [RFID - HFSSDesign1 - Modeler]
          </h1>
          <div className="flex gap-[35px] pr-[19px] pb-[3px]">
            <button aria-label="Minimize">
              <svg width="11" height="11" viewBox="0 0 11 11" stroke="#000" shapeRendering="crispEdges">
                <path d="M0 5.500h10" />
              </svg>
            </button>
            <button aria-label="Restore">
              <svg width="11" height="11" viewBox="0 0 11 11" fill="none" stroke="#000" shapeRendering="crispEdges">
                <path d="M.5 2.500h7v7h-7zM2.500 2V.5h7v7H8" />
              </svg>
            </button>
            <button aria-label="Close">
              <svg width="11" height="11" viewBox="0 0 11 11" stroke="#000">
                <path d="M.5 .5l10 10M10.500 .5l-10 10" />
              </svg>
            </button>
          </div>
        </div>

        <nav className="flex h-[19px] items-center pl-1">
          <WindowIcon />
          <div className="ml-2 flex flex-1 gap-[12px] pt-[2px] text-[13px] leading-[17px]">
            {menus.map((m) => (
              <button key={m}>{m}</button>
            ))}
          </div>
          <div className="flex gap-px pt-px">
            <button aria-label="Minimize child" className="flex h-[18px] w-[18px] items-center justify-center border border-[#e3e3e3]">
              <svg width="8" height="8" viewBox="0 0 8 8" stroke="#6f7f8f" shapeRendering="crispEdges">
                <path d="M1 6h6" strokeWidth="2" />
              </svg>
            </button>
            <button aria-label="Restore child" className="flex h-[18px] w-[18px] items-center justify-center border border-[#e3e3e3]">
              <svg width="8" height="8" viewBox="0 0 8 8" fill="none" stroke="#6f7f8f" shapeRendering="crispEdges">
                <path d="M.5 3.500h5v4h-5zM2.500 3V.5h5v4H6M2 1.500h5M1 4.500h5" />
              </svg>
            </button>
            <button aria-label="Close child" className="flex h-[18px] w-[18px] items-center justify-center border border-[#e3e3e3]">
              <svg width="8" height="8" viewBox="0 0 8 8" stroke="#6f7f8f" strokeWidth="2">
                <path d="M1 1l6 6M7 1L1 7" />
              </svg>
            </button>
          </div>
        </nav>
      </header>

      {/* TOOLBARS */}
      <div className="flex h-[31px] shrink-0 items-center gap-[11px] overflow-hidden">
        <Toolbar>
          <Buttons names={mainBar} />
        </Toolbar>
        <Toolbar>
          <Buttons names={machineBar} active="Local machine" />
          <Separator />
          <DropDown label="Machine" options={[""]} className="w-[99px]" />
          <Buttons names={["Edit machines", "|", "Queue"]} />
        </Toolbar>
        <Toolbar>
          <Buttons names={analysisBar} />
        </Toolbar>
        <Toolbar>
          <Buttons names={viewBar} />
        </Toolbar>
        <Toolbar>
          <Buttons names={visibilityBar} />
        </Toolbar>
        <Toolbar>
          <Buttons names={curveBar} />
        </Toolbar>
        <Toolbar>
          <Buttons names={sheetBar} />
        </Toolbar>
        <Toolbar>
          <Buttons names={solidBar} />
        </Toolbar>
        <Toolbar>
          <Buttons names={["Region", "|", "Point", "Plane", "|"]} />
          <DropDown
            label="Drawing plane"
            options={["XY", "YZ", "XZ"]}
            className="w-[50px] font-['Liberation_Mono',monospace] text-[12px]"
          />
          <Separator />
          <DropDown
            label="Movement mode"
            options={["Out of Plane", "In Plane", "3D"]}
            className="w-[79px] font-['Liberation_Mono',monospace] text-[12px]"
          />
        </Toolbar>
      </div>
      <div className="flex h-[30px] shrink-0 items-start gap-[11px] overflow-hidden pt-[4px]">
        <Toolbar>
          <Buttons names={["Help topics", "Context help"]} />
        </Toolbar>
        <Toolbar>
          <Buttons names={["Section A", "Section B"]} />
        </Toolbar>
        <Toolbar>
          <Buttons names={csBar} />
        </Toolbar>
        <Toolbar>
          <Buttons names={["Assign", "Radiation"]} />
        </Toolbar>
      </div>

      {/* WORK AREA */}
      <main className="relative flex min-h-0 flex-1 pb-[4px]">
        <LeftDock />
        <div className="mr-[3px] ml-[2px] w-px shrink-0 bg-white" />
        <ModelTree />
        <div className="w-1 shrink-0" />
        <ModelView />
        {measuring && <MeasureDialog onClose={() => setMeasuring(false)} />}
      </main>

      {/* MESSAGES AND PROGRESS */}
      <div className="flex h-[153px] shrink-0 border-t-2 border-[#696969] pb-[3px]">
        <BottomPanel title="Message Manager" className="flex-[951]" />
        <div className="mr-[3px] ml-[7px] w-[2px] shrink-0 bg-[#696969]" />
        <BottomPanel title="Progress" className="flex-[952] pr-[4px]" />
      </div>

      {/* STATUS */}
      <footer className="flex h-[22px] shrink-0 items-end gap-[3px] border-t border-[#a0a0a0] text-[13px]">
        <p className="flex-1 leading-[18px]">Enter the height.</p>
        <StatusField id="dx" label="dX:" value="0" />
        <StatusField id="dy" label="dY:" value="0" />
        <StatusField id="dz" label="dZ:" value="70" />
        <DropDown label="Coordinate mode" options={["Relative", "Absolute"]} className="w-[63px]" />
        <DropDown label="Coordinate type" options={["Cartesian", "Cylindrical", "Spherical"]} className="w-[74px]" />
        <span className="ml-px h-[18px] w-8 border-t border-l border-[#a0a0a0] pl-[2px] leading-[17px]">mm</span>
      </footer>
    </div>
  );
}
